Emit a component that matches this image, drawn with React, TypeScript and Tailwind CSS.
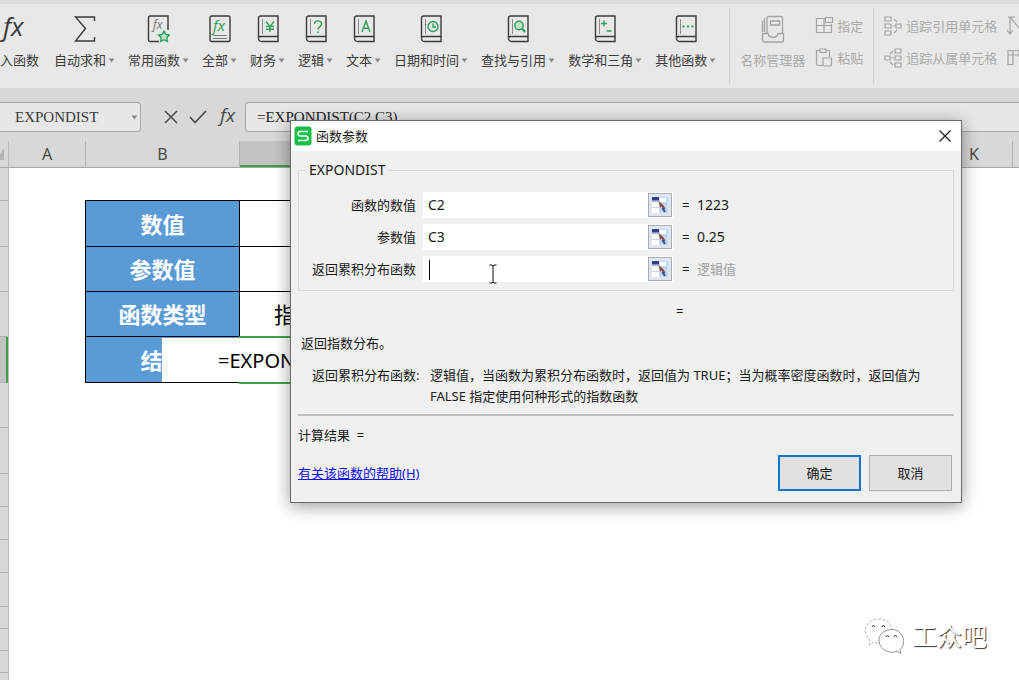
import type { ReactNode } from "react";

const GREEN = "#2f9e5b";

function Caret() {
  return (
    <svg className="w-[7px] h-[5px] shrink-0" viewBox="0 0 7 5" fill="#8a8a8a">
      <path d="M0.5 0.5h6L3.5 4.5z" />
    </svg>
  );
}

// Notebook outline shared by the function category buttons
function Book({ children }: { children: ReactNode }) {
  return (
    <svg className="w-[22px] h-7" viewBox="0 0 22 28" fill="none" stroke="#3a3a3a">
      <path strokeWidth={1.4} d="M3.5 1H21v20.500H3.500A2 2 0 0 0 1.500 23.500V3a2 2 0 0 1 2-2z" />
      <path strokeWidth={1.4} d="M1.500 23.500a3 3 0 0 0 3 3H21v-5" />
      <path stroke="#8a8a8a" d="M5.500 4v15" />
      <g stroke={GREEN} strokeWidth={1.4}>
        {children}
      </g>
    </svg>
  );
}

function Fx({ x, y, size, color }: { x: number; y: number; size: number; color: string }) {
  return (
    <text
      x={x}
      y={y}
      fontSize={size}
      fill={color}
      stroke="none"
      fontStyle="italic"
      fontFamily="Open Sans, sans-serif"
    >
      fx
    </text>
  );
}

const MENUS = [
  {
    label: "自动求和",
    icon: (
      <svg className="w-[22px] h-7" viewBox="0 0 22 28" fill="none" stroke="#3a3a3a" strokeWidth={1.4}>
        <path d="M20.500 6V2H1.500l10 11.500L1.500 26h19v-4" />
      </svg>
    ),
  },
  {
    label: "常用函数",
    icon: (
      <svg className="w-[23px] h-7" viewBox="0 0 23 28" fill="none" stroke="#3a3a3a" strokeWidth={1.4}>
        <path d="M12 26.500H3a1.500 1.500 0 0 1-1.500-1.500V2.500A1.500 1.500 0 0 1 3 1h18v14" />
        <Fx x={6} y={14} size={12} color="#777777" />
        <path
          fill="#bfe6cd"
          stroke={GREEN}
          d="M17 16l1.700 3.400 3.800.6-2.700 2.600.6 3.900-3.400-1.800-3.400 1.800.6-3.900-2.700-2.600 3.800-.6z"
        />
      </svg>
    ),
  },
  {
    label: "全部",
    icon: (
      <svg className="w-[22px] h-7" viewBox="0 0 22 28" fill="none" stroke="#3a3a3a" strokeWidth={1.4}>
        <rect x="1" y="1" width="20" height="25.500" rx="1.500" />
        <Fx x={4} y={16} size={15} color={GREEN} />
        <path stroke="#777777" strokeWidth={1} d="M4 20.500h14M4 23.500h14" />
      </svg>
    ),
  },
  {
    label: "财务",
    icon: (
      <Book>
        <path d="M9 6.500l4 5 4-5M13 11.500V17M9 11.500h8M9 14.200h8" />
      </Book>
    ),
  },
  {
    label: "逻辑",
    icon: (
      <Book>
        <path d="M9.500 9c0-4.200 7-4.200 7 0 0 2.700-3.500 2.500-3.500 5.500M13 16.500V18" />
      </Book>
    ),
  },
  {
    label: "文本",
    icon: (
      <Book>
        <path d="M9 17l4-11 4 11M10.400 13.200h5.200" />
      </Book>
    ),
  },
  {
    label: "日期和时间",
    icon: (
      <Book>
        <circle cx="13" cy="11.500" r="5" />
        <path d="M13 8.500v3.500h3" />
      </Book>
    ),
  },
  {
    label: "查找与引用",
    icon: (
      <Book>
        <circle cx="12" cy="10.500" r="4.200" fill="#bfe6cd" />
        <path strokeWidth={2} d="M15 13.500l3 3.500" />
      </Book>
    ),
  },
  {
    label: "数学和三角",
    icon: (
      <Book>
        <path d="M10 5.500v6M7 8.500h6M12.500 16h5" />
      </Book>
    ),
  },
  {
    label: "其他函数",
    icon: (
      <Book>
        <path strokeWidth={2} d="M7.500 11.500h2M12 11.500h2M16.500 11.500h2" />
      </Book>
    ),
  },
];

function GrayIcon({ children }: { children: ReactNode }) {
  return (
    <svg className="w-5 h-5 shrink-0" viewBox="0 0 20 20" fill="none" stroke="#a3a3a3" strokeWidth={1.2}>
      {children}
    </svg>
  );
}

function SmallButton({ label, icon }: { label: string; icon: ReactNode }) {
  return (
    <button className="flex items-center gap-0.5 h-5 whitespace-nowrap">
      {icon}
      {label}
    </button>
  );
}

function Ribbon() {
  return (
    <div className="flex h-[88px] shrink-0 overflow-hidden border-t-4 border-[#dcdcdc] bg-[#e8e8e8] pt-1 pb-1 text-[13px] leading-5 text-[#3c3c3c] shadow-[0_1px_2px_#b8b8b8]">
      <div className="flex shrink-0 gap-[13px] pt-[7px] pr-[13px]">
        <button className="flex w-[41px] flex-col items-start gap-[7px]">
          <svg className="w-7 h-7" viewBox="0 0 28 28">
            <Fx x={3} y={21} size={26} color="#3a3a3a" />
          </svg>
          <span className="whitespace-nowrap">入函数</span>
        </button>
        {MENUS.map((m) => (
          <button key={m.label} className="flex flex-col items-center gap-[7px] whitespace-nowrap">
            {m.icon}
            <span className="flex items-center gap-0.5">
              {m.label}
              <Caret />
            </span>
          </button>
        ))}
      </div>

      <div className="flex shrink-0 gap-2.5 border-l border-[#cfcfcf] px-2.5 text-[#ababab]">
        <button className="flex flex-col items-center gap-[7px] pt-[7px] whitespace-nowrap">
          <svg className="w-6 h-7" viewBox="0 0 24 28" fill="none" stroke="#a3a3a3" strokeWidth={1.3}>
            <path d="M6 18V3a1.500 1.500 0 0 1 1.500-1.500H20A1.500 1.500 0 0 1 21.500 3v15M3.500 17V3.500M1.500 17V6" />
            <path d="M9.500 6h9v4h-9zM1.500 18.500h5.500c1 5 9 5 10 0h5.500v6.500a2 2 0 0 1-2 2h-17a2 2 0 0 1-2-2z" />
          </svg>
          名称管理器
        </button>
        <div className="flex flex-col gap-3 pt-2">
          <SmallButton
            label="指定"
            icon={
              <GrayIcon>
                <path d="M10 2.500H1.500v14h15V8M1.500 9.500h15M9 2.500v14M10.500 1.500h7v5h-7z" />
              </GrayIcon>
            }
          />
          <SmallButton
            label="粘贴"
            icon={
              <GrayIcon>
                <path d="M8 17.500H3A1.500 1.500 0 0 1 1.500 16V2.500H5M11 2.500h3.500V9M5 1h6v3.500H5z" />
                <path d="M8 10h8.500v6a2 2 0 0 1-2 2h-4.500a2 2 0 0 1-2-2z" />
              </GrayIcon>
            }
          />
        </div>
      </div>

      <div className="flex shrink-0 gap-2.5 border-l border-[#cfcfcf] pl-2.5 text-[#ababab]">
        <div className="flex flex-col gap-3 pt-2">
          <SmallButton
            label="追踪引用单元格"
            icon={
              <GrayIcon>
                <path d="M1 1h6v4H1zM1 8h6v4H1zM1 15h6v4H1zM12 8h5v4h-5zM9 10h3M10 3l3 3M10 17l3-3" />
              </GrayIcon>
            }
          />
          <SmallButton
            label="追踪从属单元格"
            icon={
              <GrayIcon>
                <path d="M11 1h6v4h-6zM11 8h6v4h-6zM11 15h6v4h-6zM1 8h5v4H1zM6 10h4M6 6l3-3M6 14l3 3" />
              </GrayIcon>
            }
          />
        </div>
        <div className="flex flex-col gap-3 pt-2">
          <GrayIcon>
            <path d="M1 1h7M3 1v16M0 14l3 4 3-4M3 1l13 16" />
          </GrayIcon>
          <GrayIcon>
            <path d="M6 16.500H1v-14h18M1 7h18M6 2.500v14M12 2.500V9" />
          </GrayIcon>
        </div>
      </div>
    </div>
  );
}

function FormulaBar() {
  return (
    <div className="flex shrink-0 items-start bg-[#d8d8d8] pt-3.5 pb-[9px] font-['Liberation_Serif',serif] text-[15px]">
      <div className="flex h-[30px] w-[141px] items-center rounded-r border border-l-0 border-[#a6a6a6] bg-[#e7e7e7] pr-0.5">
        <input
          aria-label="名称框"
          defaultValue="EXPONDIST"
          className="min-w-0 flex-1 bg-transparent pl-[15px] text-[#3a3a3a] outline-none"
        />
        <button aria-label="名称列表">
          <Caret />
        </button>
      </div>
      <div className="flex h-[30px] w-[104px] items-center justify-end gap-2.5 pr-1.5">
        <button aria-label="取消输入">
          <svg className="w-4 h-4" viewBox="0 0 16 16" stroke="#4a4a4a" strokeWidth={1.5}>
            <path d="M2 2l12 12M14 2L2 14" />
          </svg>
        </button>
        <button aria-label="确认输入">
          <svg className="w-[18px] h-4" viewBox="0 0 18 16" fill="none" stroke="#4a4a4a" strokeWidth={1.7}>
            <path d="M1 8l5 5.500L17 2" />
          </svg>
        </button>
        <button aria-label="插入函数">
          <svg className="w-[22px] h-6" viewBox="0 0 22 24">
            <Fx x={3} y={17} size={19} color="#4a4a4a" />
          </svg>
        </button>
      </div>
      <div className="flex h-[30px] min-w-0 flex-1 rounded-l border border-r-0 border-[#a6a6a6] bg-[#e7e7e7]">
        <input
          aria-label="编辑栏"
          defaultValue="=EXPONDIST(C2,C3)"
          className="min-w-0 flex-1 bg-transparent pl-[11px] text-[#222222] outline-none"
        />
      </div>
    </div>
  );
}

const COLUMNS = [
  { label: "A", width: "w-[77px]" },
  { label: "B", width: "w-[154px]" },
  { label: "", width: "w-[157px]", selected: true },
  { label: "", width: "w-[539px]" },
  { label: "K", width: "w-[77px]" },
];

const ROWS = [
  "h-[33px]",
  "h-[46px]",
  "h-[45px]",
  "h-[45px]",
  "h-[46px]",
  "h-[45px]",
  "h-[46px]",
  "h-[33px]",
  "h-[33px]",
  "h-[33px]",
  "h-[34px]",
  "h-[22px]",
  "h-[22px]",
  "h-[22px]",
];
const ACTIVE_ROW = 4;

const DATA = [
  { name: "数值", value: "" },
  { name: "参数值", value: "" },
  { name: "函数类型", value: "指数分布" },
  { name: "结果", value: "" },
];

function Sheet() {
  return (
    <div className="flex flex-1 flex-col">
      <div className="flex h-[27px] shrink-0 overflow-hidden border-b border-[#a8a8a8] bg-[#d8d8d8] text-base text-[#4a4a4a]">
        <div className="flex w-[9px] shrink-0 items-center border-r border-[#bdbdbd]">
          <svg className="w-1 h-3" viewBox="0 0 4 12" fill="#b5b5b5">
            <path d="M4 0v12H0V6z" />
          </svg>
        </div>
        {COLUMNS.map((c, i) => (
          <div
            key={i}
            className={`flex shrink-0 items-center justify-center border-r border-[#b4b4b4] ${c.width} ${
              c.selected ? "border-b-2 border-b-[#3fa143] bg-[#c3c3c3]" : ""
            }`}
          >
            {c.label}
          </div>
        ))}
      </div>

      <div className="flex flex-1">
        <div className="w-[9px] shrink-0 border-r border-[#b8b8b8] bg-[#d8d8d8]">
          {ROWS.map((h, i) => (
            <div
              key={i}
              className={`border-b border-[#b0b0b0] ${h} ${
                i === ACTIVE_ROW ? "border-r-2 border-r-[#3fa143] bg-[#c3c3c3]" : ""
              }`}
            />
          ))}
        </div>

        <div className="relative pt-8 pl-[76px]">
          <table className="w-[312px] table-fixed border-collapse text-center text-[22px] leading-8">
            <tbody>
              {DATA.map((d, i) => (
                <tr key={d.name} className={ROWS[i + 1]}>
                  <th scope="row" className="w-[154px] border border-black bg-[#5b9bd5] p-0 font-bold text-white">
                    {d.name}
                  </th>
                  <td
                    className={
                      i === 3
                        ? "border-2 border-x-0 border-[#3fa143] p-0"
                        : "border border-black p-0 text-black"
                    }
                  >
                    {d.value}
                  </td>
                </tr>
              ))}
            </tbody>
          </table>
          {/* Cell editor grows to the left over column B */}
          <input
            aria-label="单元格编辑"
            defaultValue="=EXPONDIST(C2,C3)"
            className="absolute top-[170px] left-[153px] h-11 w-[312px] bg-white pl-14 text-xl text-black outline-none"
          />
        </div>
      </div>
    </div>
  );
}

const ARGS = [
  { id: "arg-x", label: "函数的数值", value: "C2", result: "1223" },
  { id: "arg-lambda", label: "参数值", value: "C3", result: "0.25" },
  { id: "arg-cumulative", label: "返回累积分布函数", value: "", result: "逻辑值", pending: true },
];

function RangeIcon() {
  return (
    <svg className="w-[18px] h-[18px]" viewBox="0 0 18 18">
      <rect x="1" y="1" width="16" height="16" fill="#c5d9f5" />
      <path fill="#ffffff" d="M1 6h7v5H1zM1 12h7v5H1zM9 2h6v4H9z" />
      <path fill="#3b3d86" d="M1 1h7v3H1z" />
      <path fill="#8d8fae" d="M1 4h7v1.500H1z" />
      <path d="M7.500 5l1.500 7 1.500-1.500 2 3.500 2-1-2-4z" fill="#8a5548" />
      <path d="M11.500 12l2.500 4" stroke="#33518f" strokeWidth={2} />
    </svg>
  );
}

function FunctionDialog() {
  return (
    <div
      role="dialog"
      aria-labelledby="dialog-title"
      className="absolute top-[120px] left-[290px] w-[672px] border border-[#6b6b6b] bg-[#f0f0f0] text-[13px] leading-5 text-[#1a1a1a] shadow-[0_3px_16px_rgba(0,0,0,0.4)]"
    >
      <div className="flex h-[30px] items-center bg-white pr-2.5 pb-px pl-[3px]">
        <svg className="w-[18px] h-5" viewBox="0 0 18 20" fill="none">
          <rect x="0.500" y="0.500" width="17" height="19" rx="3" fill="#17bf45" />
          <path stroke="#ffffff" strokeWidth={1.6} d="M14 5.500H6.500Q4 5.500 4 7.700T6.500 10h5Q14 10 14 12.200t-2.500 2.300H4" />
        </svg>
        <h1 id="dialog-title" className="flex-1 pl-1">
          函数参数
        </h1>
        <button aria-label="关闭">
          <svg className="w-3 h-3" viewBox="0 0 12 12" stroke="#222222" strokeWidth={1.3}>
            <path d="M0.500 0.500l11 11M11.500 0.500l-11 11" />
          </svg>
        </button>
      </div>

      <div className="px-[7px] pt-[9px] pb-[11px]">
        <fieldset className="border border-[#dadada] pb-2">
          <legend className="ml-[7px] px-[3px] text-sm leading-5">EXPONDIST</legend>
          <div className="flex flex-col gap-1.5 pt-3">
            {ARGS.map((a) => (
              <div key={a.id} className="flex h-[26px] items-center">
                <label htmlFor={a.id} className="w-[117px] text-right">
                  {a.label}
                </label>
                <div className="relative ml-[7px] flex h-[26px] w-[250px] items-center bg-white pr-px">
                  <input
                    id={a.id}
                    defaultValue={a.value}
                    className="min-w-0 flex-1 bg-transparent pl-[5px] text-sm outline-none"
                  />
                  {a.pending && (
                    <>
                      <span className="absolute top-1 left-1.5 h-5 w-px bg-black" />
                      <svg
                        className="absolute top-2 left-[66px] w-2 h-5"
                        viewBox="0 0 8 20"
                        fill="none"
                        stroke="#111111"
                      >
                        <path d="M0.500 1h2.500l1 1 1-1h2.500M4 2v16M0.500 19h2.500l1-1 1 1h2.500" />
                      </svg>
                    </>
                  )}
                  <button
                    aria-label="选择区域"
                    className="flex h-6 w-6 items-center justify-center border border-[#a9adb3] bg-[#dfe6f0]"
                  >
                    <RangeIcon />
                  </button>
                </div>
                <span className="w-6 pl-[9px]">=</span>
                <output htmlFor={a.id} className={a.pending ? "text-[#a0a0a0]" : "text-sm"}>
                  {a.result}
                </output>
              </div>
            ))}
          </div>
        </fieldset>

        <p className="pt-2.5 pl-[378px]">=</p>
        <p className="pt-3 pl-[3px]">返回指数分布。</p>
        <div className="flex pt-3 pl-3.5 leading-[21px]">
          <p className="w-[118px] shrink-0">返回累积分布函数:</p>
          <p className="max-w-[500px]">
            逻辑值，当函数为累积分布函数时，返回值为 TRUE；当为概率密度函数时，返回值为 FALSE
            指定使用何种形式的指数函数
          </p>
        </div>
        <hr className="mt-[7px] border-t-2 border-[#c0c0c0]" />
        <p className="pt-[9px]">计算结果&nbsp; =</p>
        <div className="flex items-center pt-2.5 pr-0.5">
          <a href="#help" className="flex-1 text-[#0f0fee] underline">
            有关该函数的帮助(H)
          </a>
          <div className="flex gap-2">
            <button className="h-9 w-[83px] border-2 border-[#0f74d0] bg-[#e1e1e1]">确定</button>
            <button className="h-9 w-[83px] border border-[#adadad] bg-[#e1e1e1]">取消</button>
          </div>
        </div>
      </div>
    </div>
  );
}

function Watermark() {
  return (
    <div className="absolute right-8 bottom-[26px] flex items-center gap-2">
      <svg className="w-10 h-9" viewBox="0 0 40 36" fill="none" stroke="#a5a5a5" strokeWidth={0.8}>
        <path strokeDasharray="3 1.500" d="M14 25c-1 0-3 0-4-1l-5 3 1-5C-4 13 3 1 15 1c7 0 12 4 13 10" />
        <path
          stroke="#777777"
          fill="#ffffff"
          d="M28 11.500c-17 0-17 20-2 22.500 3 .5 5 0 7-1l4 2.500-1-4c8-7 2-20-8-20z"
        />
        <path
          stroke="#555555"
          strokeWidth={1.2}
          d="M8 9q1.500-3 3 0M18 9q1.500-3 3 0M22 19q1.500-3 3 0M30 19q1.500-3 3 0"
        />
      </svg>
      <span className="text-[25px] leading-9 text-white [text-shadow:1px_1px_1px_#333333]">工众吧</span>
    </div>
  );
}

export default function App() {
  return (
    <div className="relative flex min-h-screen flex-col overflow-hidden bg-white font-['Noto_Sans','Noto_Sans_CJK_SC',sans-serif]">
      <Ribbon />
      <FormulaBar />
      <Sheet />
      <FunctionDialog />
      <Watermark />
    </div>
  );
}
